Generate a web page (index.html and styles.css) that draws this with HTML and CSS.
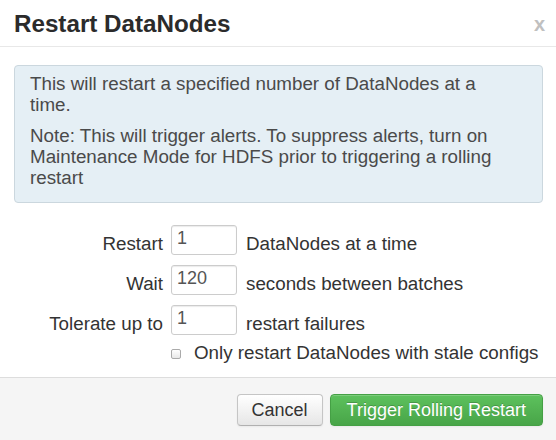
FILE: index.html
```html
<!DOCTYPE html>
<html>
<head>
<meta charset="utf-8">
<link rel="stylesheet" href="styles.css">
</head>
<body>
<div class="modal">
  <div class="modal-header">
    <h3 class="title">Restart DataNodes</h3>
    <span class="close">x</span>
  </div>
  <div class="modal-body">
    <div class="alert">
      <p>This will restart a specified number of DataNodes at a time.</p>
      <p>Note: This will trigger alerts. To suppress alerts, turn on Maintenance Mode for HDFS prior to triggering a rolling restart</p>
    </div>
    <div class="form">
      <label class="lbl">Restart</label>
      <input class="num" type="text" value="1">
      <span class="txt">DataNodes at a time</span>
      <label class="lbl">Wait</label>
      <input class="num" type="text" value="120">
      <span class="txt">seconds between batches</span>
      <label class="lbl">Tolerate up to</label>
      <input class="num" type="text" value="1">
      <span class="txt">restart failures</span>
      <label class="check"><span class="box"></span>Only restart DataNodes with stale configs</label>
    </div>
  </div>
  <div class="modal-footer">
    <button class="btn">Cancel</button>
    <button class="btn btn-success">Trigger Rolling Restart</button>
  </div>
</div>
</body>
</html>
```
FILE: styles.css
```css
html, body {
  margin: 0;
  padding: 0;
  background: #fff;
}
body {
  font-family: "Liberation Sans", Arial, Helvetica, sans-serif;
  color: #333;
  font-size: 18.8px;
  line-height: 20px;
}
.modal {
  width: 556px;
  height: 440px;
  display: flex;
  flex-direction: column;
  overflow: hidden;
}
.modal-header {
  box-sizing: border-box;
  height: 47px;
  border-bottom: 1px solid #e8e8e8;
  display: flex;
  align-items: center;
  justify-content: space-between;
  padding: 0 12px 0 14px;
  flex: none;
}
.title {
  margin: 0;
  font-size: 24.2px;
  font-weight: bold;
  color: #2b2b2b;
  line-height: 30px;
  padding-top: 2px;
}
.close {
  font-size: 20px;
  font-weight: bold;
  color: #c0c0c0;
  line-height: 20px;
  padding-top: 2px;
  margin-right: -1px;
}
.modal-body {
  padding: 18px 13px 0 14px;
  flex: 1;
}
.alert {
  box-sizing: border-box;
  height: 138px;
  background: #e5eff5;
  border: 1px solid #cbd7de;
  border-radius: 4px;
  padding: 7px 30px 0 15px;
  color: #4a4a4a;
}
.alert p {
  margin: 0 0 10px 0;
  line-height: 21px;
}
.form {
  margin-top: 22px;
  display: grid;
  grid-template-columns: 149px 66px auto;
  column-gap: 8px;
  row-gap: 10px;
  align-items: center;
}
.lbl {
  text-align: right;
  padding-top: 8px;
}
.num {
  box-sizing: border-box;
  width: 66px;
  height: 30px;
  border: 1px solid #ccc;
  border-radius: 3px;
  box-shadow: inset 0 1px 1px rgba(0,0,0,0.08);
  font-family: inherit;
  font-size: 18px;
  color: #555;
  padding: 0 5px 4px 5px;
  margin: 0;
}
.txt {
  padding-top: 8px;
  padding-left: 1px;
}
.check {
  grid-column: 2 / 4;
  display: flex;
  align-items: center;
  margin-top: -2px;
}
.box {
  box-sizing: border-box;
  width: 10px;
  height: 10px;
  border: 1px solid #aaa;
  border-radius: 2px;
  background: linear-gradient(#fff, #e8e8e8);
  margin: 1px 13px 0 0;
}
.modal-footer {
  box-sizing: border-box;
  height: 63px;
  flex: none;
  background: #f5f5f5;
  border-top: 1px solid #ddd;
  display: flex;
  justify-content: flex-end;
  align-items: flex-start;
  gap: 7px;
  padding: 16px 13px 0 0;
}
.btn {
  font-family: inherit;
  font-size: 18px;
  height: 32px;
  padding: 0 14px;
  border-radius: 4px;
  cursor: pointer;
  color: #333;
  border: 1px solid #c5c5c5;
  border-bottom-color: #b0b0b0;
  background: linear-gradient(#ffffff, #e6e6e6);
  box-shadow: inset 0 1px 0 rgba(255,255,255,0.2), 0 1px 2px rgba(0,0,0,0.05);
  margin: 0;
}
.btn-success {
  color: #fff;
  border-color: #45a045;
  background: linear-gradient(#5dc15d, #48a548);
  text-shadow: 0 -1px 0 rgba(0,0,0,0.2);
  padding: 0 16px;
}
```
